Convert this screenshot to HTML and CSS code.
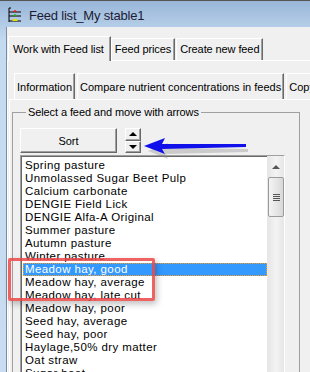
FILE: index.html
```html
<!DOCTYPE html>
<html lang="en">
<head>
    <meta charset="UTF-8">
    <title>Feed list_My stable1</title>
    <link rel="stylesheet" href="styles.css">
</head>
<body>
    <div class="window">
        <div class="titlebar">
            <svg class="app-icon" width="14" height="16" viewBox="0 0 14 16">
                <path d="M1 1v14M1 1h2M1 5h12M1 9h12M1 14h12" stroke="#000" stroke-width="1" fill="none"/>
                <path d="M5 5q2-4 4 0z" fill="#e02020"/>
                <path d="M5 9q2-4 4 0z" fill="#20b020"/>
                <path d="M4 14q3-5 6 0z" fill="#e8e000"/>
            </svg>
            <span class="title">Feed list_My stable1</span>
        </div>

        <div class="client">
            <!-- Top level tabs -->
            <div class="tabs outer-tabs">
                <div class="tab active">Work with Feed list</div>
                <div class="tab">Feed prices</div>
                <div class="tab">Create new feed</div>
            </div>

            <div class="page outer-page">
                <!-- Second level tabs -->
                <div class="tabs inner-tabs">
                    <div class="tab">Information</div>
                    <div class="tab">Compare nutrient concentrations in feeds</div>
                    <div class="tab">Copy feeds</div>
                </div>

                <div class="page inner-page">
                    <fieldset class="group">
                        <legend>Select a feed and move with arrows</legend>

                        <div class="controls">
                            <button class="btn sort">Sort</button>
                            <div class="spin">
                                <button class="btn spin-btn"><span class="tri up"></span></button>
                                <button class="btn spin-btn"><span class="tri down"></span></button>
                            </div>
                        </div>

                        <div class="listbox">
                            <ul class="items">
                                <li>Spring pasture</li>
                                <li>Unmolassed Sugar Beet Pulp</li>
                                <li>Calcium carbonate</li>
                                <li>DENGIE Field Lick</li>
                                <li>DENGIE Alfa-A Original</li>
                                <li>Summer pasture</li>
                                <li>Autumn pasture</li>
                                <li>Winter pasture</li>
                                <li class="selected">Meadow hay, good</li>
                                <li>Meadow hay, average</li>
                                <li>Meadow hay, late cut</li>
                                <li>Meadow hay, poor</li>
                                <li>Seed hay, average</li>
                                <li>Seed hay, poor</li>
                                <li>Haylage,50% dry matter</li>
                                <li>Oat straw</li>
                                <li>Sugar beet</li>
                            </ul>
                            <div class="scrollbar">
                                <div class="scroll-arrow"><span class="tri up small"></span></div>
                                <div class="thumb"><span class="grip"></span></div>
                            </div>
                        </div>
                    </fieldset>
                </div>
            </div>
        </div>

        <!-- annotations drawn over the screenshot -->
        <svg class="pointer" width="120" height="24" viewBox="0 0 120 24">
            <path d="M6 11 L26 3 L24 8 L106 9 L106 12 L24 14 L26 19 Z" fill="#888" opacity="0.35" transform="translate(2,3)"/>
            <path d="M4 9 L25 1 L22 7 L106 7 L106 10 L22 12 L25 17 Z" fill="#1010ea"/>
        </svg>
        <div class="callout"></div>
    </div>
</body>
</html>
```

FILE: styles.css
```css
/* General Styling */
body {
    margin: 0;
    padding: 0;
    font-family: 'Liberation Sans', Arial, sans-serif;
    font-size: 11px;
    color: #000000;
    background: #ffffff;
    overflow: hidden;
}

.window {
    position: relative;
    width: 310px;
    height: 372px;
    overflow: hidden;
    background: linear-gradient(#99b6d8, #c4daf0 40px, #c8ddf1);
    border-top: 1px solid #555555;
    box-sizing: border-box;
    display: flex;
    flex-direction: column;
}

/* Title bar */
.titlebar {
    height: 26px;
    display: flex;
    align-items: center;
    padding: 2px 0 0 8px;
    box-sizing: border-box;
    flex-shrink: 0;
}

.title {
    margin-left: 7px;
    font-family: 'Liberation Sans', Arial, sans-serif;
    font-size: 13px;
    color: #1b1b35;
    letter-spacing: -0.2px;
}

/* Client area */
.client {
    flex: 1;
    margin-left: 6px;
    border-left: 1px solid #7a8ca0;
    background: #f0f0f0;
    padding-top: 9px;
    display: flex;
    flex-direction: column;
    min-height: 0;
}

/* Tabs */
.tabs {
    display: flex;
    align-items: flex-end;
    position: relative;
    z-index: 1;
    white-space: nowrap;
}

.tab {
    background: #f0f0f0;
    border-top: 1px solid #ffffff;
    border-left: 1px solid #ffffff;
    border-right: 1px solid #696969;
    box-shadow: inset -1px 0 0 #a0a0a0;
    box-sizing: border-box;
    letter-spacing: -0.1px;
}

.outer-tabs {
    height: 24px;
    padding-left: 3px;
}

.outer-tabs .tab {
    height: 22px;
    line-height: 21px;
    padding: 0 3px;
}

.outer-tabs .tab + .tab {
    margin-left: 1px;
}

.outer-tabs .tab.active {
    height: 25px;
    line-height: 25px;
    margin-left: -2px;
    margin-right: -1px;
    margin-bottom: -1px;
    padding: 0 6px 0 4px;
}

.inner-tabs {
    height: 26px;
    padding-left: 6px;
    margin-top: 12px;
}

.inner-tabs .tab {
    height: 26px;
    line-height: 27px;
    padding: 0 2px;
    letter-spacing: 0;
}

.inner-tabs .tab + .tab {
    margin-left: 2px;
}

.page {
    background: #f0f0f0;
    border-top: 1px solid #ffffff;
    border-left: 1px solid #ffffff;
}

.outer-page {
    flex: 1;
    min-height: 0;
}

.inner-page {
    margin-left: 1px;
    padding: 6px 0 0 2px;
    width: 320px;
    height: 300px;
}

/* Group box */
.group {
    margin: 0;
    padding: 10px 0 0 7px;
    width: 288px;
    height: 300px;
    box-sizing: border-box;
    border: 1px solid #a0a0a0;
}

.group legend {
    padding: 0 2px;
    margin-left: 6px;
    letter-spacing: -0.1px;
}

.controls {
    display: flex;
    align-items: center;
    gap: 8px;
    height: 25px;
}

.btn {
    font-family: 'Liberation Sans', Arial, sans-serif;
    font-size: 11px;
    background: #f0f0f0;
    color: #000000;
    margin: 0;
    padding: 0;
    border-top: 1px solid #ffffff;
    border-left: 1px solid #ffffff;
    border-right: 1px solid #696969;
    border-bottom: 1px solid #696969;
    box-shadow: inset -1px -1px 0 #a0a0a0;
    box-sizing: border-box;
}

.sort {
    width: 97px;
    height: 25px;
    padding-top: 1px;
}

.spin {
    display: flex;
    flex-direction: column;
    width: 16px;
    height: 25px;
}

.spin-btn {
    flex: 1;
    display: flex;
    align-items: center;
    justify-content: center;
}

.tri {
    width: 0;
    height: 0;
    border-left: 4px solid transparent;
    border-right: 4px solid transparent;
}

.tri.up {
    border-bottom: 4px solid #000000;
}

.tri.down {
    border-top: 4px solid #000000;
}

.tri.small {
    border-bottom: 4px solid #555555;
}

/* List box */
.listbox {
    margin-top: 2px;
    width: 265px;
    height: 230px;
    background: #ffffff;
    border-top: 1px solid #a0a0a0;
    border-left: 1px solid #a0a0a0;
    border-right: 1px solid #ffffff;
    box-shadow: inset 1px 1px 0 #696969;
    display: flex;
    padding: 3px 0 0 2px;
    box-sizing: border-box;
}

.items {
    flex: 1;
    list-style: none;
    margin: 0;
    padding: 0;
}

.items li {
    height: 13px;
    line-height: 13px;
    padding-left: 2px;
    white-space: nowrap;
    overflow: hidden;
    font-size: 11.5px;
    letter-spacing: 0.4px;
}

.items li.selected {
    background: #3399ff;
    color: #ffffff;
    outline: 1px dotted #ff9a1a;
    outline-offset: -1px;
}

.scrollbar {
    width: 16px;
    margin-top: -3px;
    background: linear-gradient(90deg, #e6e6e6, #f3f3f3 50%, #e6e6e6);
    border-left: 1px solid #e8e8e8;
}

.scroll-arrow {
    height: 21px;
    display: flex;
    align-items: center;
    justify-content: center;
}

.thumb {
    height: 40px;
    border: 1px solid #9a9a9a;
    border-radius: 2px;
    background: linear-gradient(90deg, #f4f4f4, #e4e4e4 60%, #d8d8d8);
    display: flex;
    align-items: center;
    justify-content: center;
    box-sizing: border-box;
}

.grip {
    width: 7px;
    height: 7px;
    background: repeating-linear-gradient(#555555 0, #555555 1px, transparent 1px, transparent 2px);
}

/* Annotations */
.pointer {
    position: absolute;
    left: 140px;
    top: 136px;
}

.callout {
    position: absolute;
    left: 8px;
    top: 257px;
    width: 147px;
    height: 43px;
    box-sizing: border-box;
    border: 3px solid rgba(236, 70, 70, 0.85);
    border-radius: 2px;
    box-shadow: 2px 3px 6px rgba(0, 0, 0, 0.25);
}
```
